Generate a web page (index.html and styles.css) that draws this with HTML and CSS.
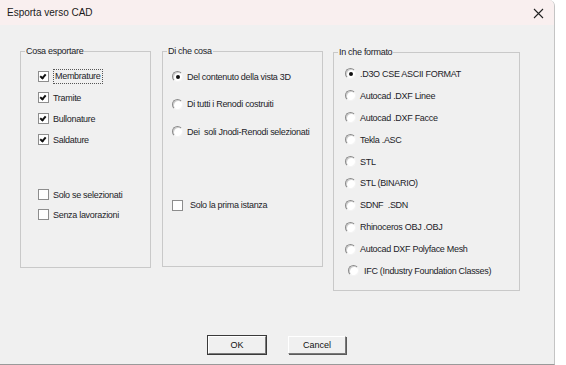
FILE: index.html
```html
<!DOCTYPE html>
<html>

<head>
    <meta name="viewport" content="width=device-width, initial-scale=1.0" />
    <title>Esporta verso CAD</title>
    <link rel="stylesheet" href="styles.css">
</head>

<body>
    <div class="window">
        <!-- TITLE BAR -->
        <header class="titlebar">
            <span class="title">Esporta verso CAD</span>
            <span class="close">
                <svg width="11" height="11" viewBox="0 0 11 11">
                    <path d="M1 1 L10 10 M10 1 L1 10" stroke="#222" stroke-width="1.1" fill="none" />
                </svg>
            </span>
        </header>

        <div class="dialog-body">
            <div class="groups">
                <!-- COSA ESPORTARE -->
                <fieldset class="group group-what">
                    <legend>Cosa esportare</legend>
                    <div class="group-inner">
                        <div class="opt first"><span class="check on"></span><span class="focus">Membrature</span></div>
                        <div class="opt"><span class="check on"></span><span>Tramite</span></div>
                        <div class="opt"><span class="check on"></span><span>Bullonature</span></div>
                        <div class="opt"><span class="check on"></span><span>Saldature</span></div>
                        <div class="opt spaced"><span class="check"></span><span>Solo se selezionati</span></div>
                        <div class="opt tight"><span class="check"></span><span>Senza lavorazioni</span></div>
                    </div>
                </fieldset>

                <!-- DI CHE COSA -->
                <fieldset class="group group-source">
                    <legend>Di che cosa</legend>
                    <div class="group-inner">
                        <div class="opt first"><span class="radio on"></span><span>Del contenuto della vista 3D</span></div>
                        <div class="opt"><span class="radio"></span><span>Di tutti i Renodi costruiti</span></div>
                        <div class="opt"><span class="radio"></span><span>Dei&nbsp; soli Jnodi-Renodi selezionati</span></div>
                        <div class="opt spaced"><span class="check"></span><span>Solo la prima istanza</span></div>
                    </div>
                </fieldset>

                <!-- IN CHE FORMATO -->
                <fieldset class="group group-format">
                    <legend>In che formato</legend>
                    <div class="group-inner">
                        <div class="opt first"><span class="radio on"></span><span>.D3O CSE ASCII FORMAT</span></div>
                        <div class="opt"><span class="radio"></span><span>Autocad .DXF Linee</span></div>
                        <div class="opt"><span class="radio"></span><span>Autocad .DXF Facce</span></div>
                        <div class="opt"><span class="radio"></span><span>Tekla .ASC</span></div>
                        <div class="opt"><span class="radio"></span><span>STL</span></div>
                        <div class="opt"><span class="radio"></span><span>STL (BINARIO)</span></div>
                        <div class="opt"><span class="radio"></span><span>SDNF&nbsp; .SDN</span></div>
                        <div class="opt"><span class="radio"></span><span>Rhinoceros OBJ .OBJ</span></div>
                        <div class="opt"><span class="radio"></span><span>Autocad DXF Polyface Mesh</span></div>
                        <div class="opt indent"><span class="radio"></span><span>IFC (Industry Foundation Classes)</span></div>
                    </div>
                </fieldset>
            </div>

            <!-- BUTTONS -->
            <div class="buttons">
                <button class="btn btn-default">OK</button>
                <button class="btn">Cancel</button>
            </div>
        </div>
    </div>
</body>

</html>
```

FILE: styles.css
```css
body {
    margin: 0;
    background-color: #fff;
    font-family: "Liberation Sans", Arial, sans-serif;
}

.window {
    width: 554px;
    height: 364px;
    background-color: #f0f0f0;
    border-right: 1px solid #c4c4c4;
    border-bottom: 1px solid #9a9a9a;
    border-top-right-radius: 6px;
    overflow: hidden;
}

.titlebar {
    height: 25px;
    background-color: #f9efef;
    display: flex;
    align-items: center;
    justify-content: space-between;
    padding: 0 8px 0 7px;
}

.title {
    font-size: 10px;
    color: #1a1a1a;
    padding-bottom: 1px;
}

.close {
    display: flex;
    margin-right: 2px;
    margin-top: 1px;
}

.dialog-body {
    padding-top: 21px;
}

.groups {
    display: flex;
    align-items: flex-start;
    padding-left: 20px;
}

/* GROUP BOXES */
.group {
    margin: 0;
    padding: 0;
    border: 1px solid #c9c9c9;
    box-sizing: border-box;
    font-size: 9px;
    letter-spacing: -0.3px;
    color: #1c1c28;
}

.group legend {
    margin-left: 4px;
    padding: 0 1px;
    line-height: 11px;
}

.group-what {
    width: 131px;
    height: 222px;
}

.group-what .group-inner {
    padding-left: 17px;
}

.group-source {
    width: 161px;
    height: 221px;
    margin-left: 11px;
}

.group-source .group-inner {
    padding-left: 9px;
}

.group-format {
    width: 187px;
    height: 244px;
    margin-left: 10px;
    margin-top: 1px;
}

.group-format .group-inner {
    padding-left: 11px;
}

.opt {
    display: flex;
    align-items: center;
    height: 21px;
}

.group-what .opt.first {
    margin-top: 9px;
}

.group-what .opt.spaced {
    margin-top: 34px;
}

.group-what .opt.tight {
    margin-top: -1px;
}

.group-source .opt {
    height: 27.5px;
}

.group-source .opt.first {
    margin-top: 6px;
}

.group-source .opt.spaced {
    margin-top: 49px;
    height: 21px;
}

.group-format .opt {
    height: 21.9px;
}

.group-format .opt.first {
    margin-top: 5px;
}

.group-format .opt.indent {
    padding-left: 3px;
}

/* CHECKBOX */
.check {
    width: 9px;
    height: 9px;
    border: 1px solid #8d8d8d;
    background-color: #fff;
    margin-right: 4px;
    flex-shrink: 0;
    position: relative;
}

.check.on::after {
    content: "";
    position: absolute;
    left: 2px;
    top: 1px;
    width: 2px;
    height: 4px;
    border: solid #111;
    border-width: 0 2px 2px 0;
    transform: rotate(40deg);
}

.focus {
    border: 1px dotted #555;
    padding: 1px 1px 2px 1px;
}

.group-source .check {
    margin-right: 7px;
}

/* RADIO */
.radio {
    width: 9px;
    height: 9px;
    border-radius: 50%;
    border: 1px solid;
    border-color: #8a8a8a #f4f4f4 #f4f4f4 #8a8a8a;
    background-color: #fff;
    box-shadow: inset 1px 1px 0 #d0d0d0;
    margin-right: 4px;
    flex-shrink: 0;
    position: relative;
}

.radio.on::after {
    content: "";
    position: absolute;
    left: 2.5px;
    top: 2.5px;
    width: 4px;
    height: 4px;
    border-radius: 50%;
    background-color: #111;
}

.group-format .opt.indent .radio {
    margin-right: 5px;
}

/* BUTTONS */
.buttons {
    display: flex;
    justify-content: center;
    gap: 22px;
    margin-top: 45px;
}

.btn {
    width: 58px;
    height: 18px;
    padding: 0;
    font-family: "Liberation Sans", Arial, sans-serif;
    font-size: 9px;
    color: #111;
    background-color: #f0f0f0;
    border: 1px solid;
    border-color: #fff #7a7a7a #7a7a7a #fff;
    box-shadow: 1px 1px 0 #5a5a5a;
}

.btn-default {
    outline: 1px solid #3a3a3a;
}
```
